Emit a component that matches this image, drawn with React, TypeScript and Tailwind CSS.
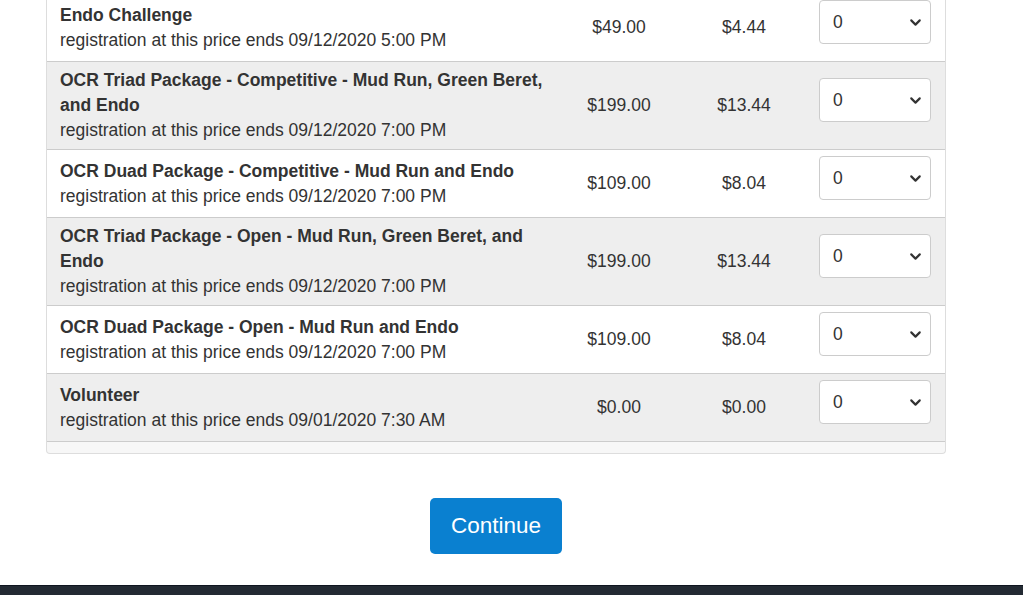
import { ChevronDown } from "lucide-react";

type Row = {
  name: string;
  ends: string;
  price: string;
  fee: string;
};

const rows: Row[] = [
  { name: "Endo Challenge", ends: "09/12/2020 5:00 PM", price: "$49.00", fee: "$4.44" },
  {
    name: "OCR Triad Package - Competitive - Mud Run, Green Beret, and Endo",
    ends: "09/12/2020 7:00 PM",
    price: "$199.00",
    fee: "$13.44",
  },
  {
    name: "OCR Duad Package - Competitive - Mud Run and Endo",
    ends: "09/12/2020 7:00 PM",
    price: "$109.00",
    fee: "$8.04",
  },
  {
    name: "OCR Triad Package - Open - Mud Run, Green Beret, and Endo",
    ends: "09/12/2020 7:00 PM",
    price: "$199.00",
    fee: "$13.44",
  },
  {
    name: "OCR Duad Package - Open - Mud Run and Endo",
    ends: "09/12/2020 7:00 PM",
    price: "$109.00",
    fee: "$8.04",
  },
  { name: "Volunteer", ends: "09/01/2020 7:30 AM", price: "$0.00", fee: "$0.00" },
];

const QtySelect = () => (
  <div className="relative mb-[11px] h-[44px] w-[112px] rounded-[4px] border border-[#ccc] bg-white">
    <span className="absolute left-[13px] top-[9px] text-[17.5px] leading-6 text-[#333]">0</span>
    <ChevronDown
      className="absolute right-[6px] top-[13px] text-[#333]"
      size={17}
      strokeWidth={3}
    />
  </div>
);

const App = () => {
  return (
    <div
      className="flex min-h-[595px] flex-col bg-white text-[17.5px] text-[#333]"
      style={{ fontFamily: '"Liberation Sans", Arial, sans-serif' }}
    >
      <div className="-mt-[6px] ml-[46px] w-[900px]">
        <div className="overflow-hidden rounded-b-[4px] border border-t-0 border-[#ddd] bg-[#f7f7f7]">
          {rows.map((row, i) => (
            <div
              key={row.name}
              className={`grid grid-cols-[509px_126px_124px_138px] items-center border-b border-[#ccc] last:border-b-[2px] last:border-[#eee] ${
                i % 2 === 1 ? "bg-[#eee]" : "bg-white"
              }`}
            >
              <div className="py-[6px] pl-[13px] pr-[10px] leading-[25px]">
                <div className="font-bold">{row.name}</div>
                <div>registration at this price ends {row.ends}</div>
              </div>
              <div className="text-center">{row.price}</div>
              <div className="text-center">{row.fee}</div>
              <div className="px-[13px] py-[6px]">
                <QtySelect />
              </div>
            </div>
          ))}
          <div className="h-[11px]" />
        </div>

        <div className="flex justify-center pt-[44px]">
          <button className="h-[56px] w-[132px] rounded-[5px] bg-[#0a80d0] text-[22.5px] text-white">
            Continue
          </button>
        </div>
      </div>

      <div className="mt-auto h-[10px] border-t border-[#0f1520] bg-[#232a33]" />
    </div>
  );
};

export default App;
